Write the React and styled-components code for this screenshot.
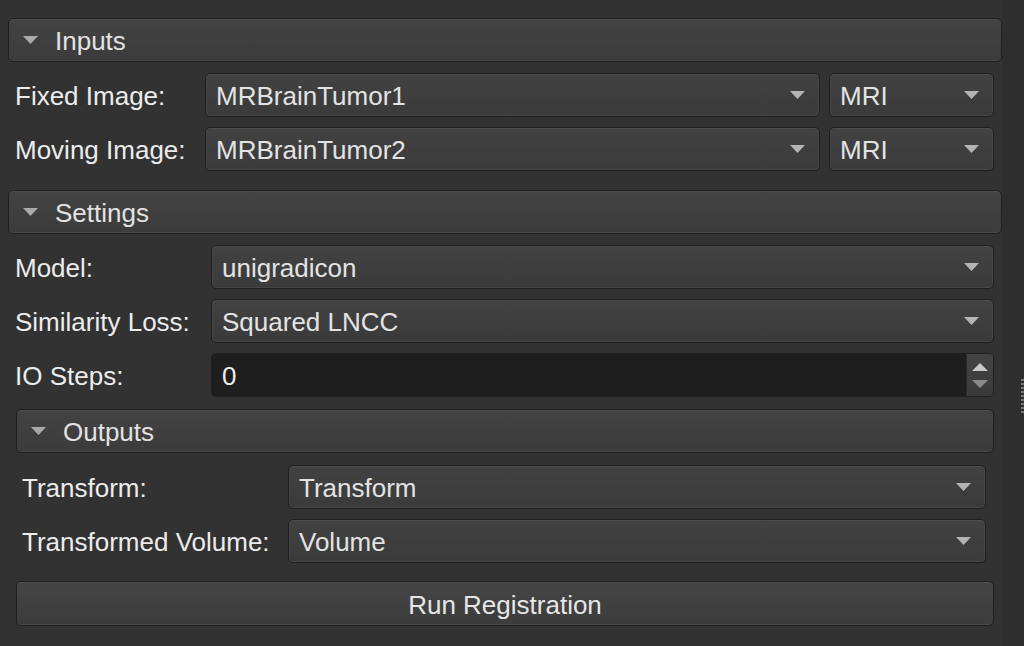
import styled, { createGlobalStyle } from 'styled-components';

const GlobalStyle = createGlobalStyle`
  html, body {
    margin: 0;
    padding: 0;
    background: #323232;
  }
  body {
    font-family: "Liberation Sans", Arial, sans-serif;
    font-size: 26px;
    color: #e6e6e6;
  }
`;

// ─── page frame ───
const Page = styled.div`
  display: flex;
  width: 1024px;
  height: 646px;
  overflow: hidden;
  background: #323232;
`;

const Panel = styled.div`
  width: 994px;
  padding: 18px 0 0 8px;
  display: flex;
  flex-direction: column;
`;

const SideStrip = styled.div`
  flex: 1;
  background: #2e2e2e;
  display: flex;
  justify-content: flex-end;
  padding-top: 379px;
`;

const SplitHandle = styled.div`
  width: 3px;
  height: 34px;
  background: repeating-linear-gradient(
    to bottom,
    #777 0px,
    #777 2px,
    transparent 2px,
    transparent 4px
  );
`;

// ─── collapsible section ───
const SectionHeader = styled.div`
  height: 44px;
  box-sizing: border-box;
  display: flex;
  align-items: center;
  gap: 17px;
  padding: 2px 0 0 14px;
  margin-left: ${p => p.$indent || 0}px;
  margin-top: ${p => p.$top || 0}px;
  border: 1px solid #1f1f1f;
  border-radius: 5px;
  background: linear-gradient(to bottom, #434343, #3b3b3b);
  box-shadow: inset 0 1px 0 #4d4d4d, inset 0 -1px 0 #464646;
  color: #e2e2e2;

  svg {
    margin-top: -2px;
  }
`;

const SectionBody = styled.div`
  display: flex;
  flex-direction: column;
  gap: 10px;
  padding: ${p => p.$top || 11}px ${p => p.$right || 8}px 0 ${p => p.$left || 7}px;
  margin-bottom: ${p => p.$bottom || 0}px;
`;

const Caret = () => (
  <svg width="15" height="8" viewBox="0 0 15 8">
    <polygon points="0,0 15,0 7.5,8" fill="#a9a9a9" />
  </svg>
);

// ─── form rows ───
const Row = styled.div`
  display: grid;
  grid-template-columns: ${p => p.$label}px 1fr ${p => (p.$extra ? '165px' : '')};
  column-gap: 9px;
  height: 44px;
  align-items: stretch;
`;

const Label = styled.div`
  display: flex;
  align-items: center;
  padding-top: 3px;
  color: #ececec;
  white-space: nowrap;
`;

const Combo = styled.div`
  display: flex;
  align-items: center;
  justify-content: space-between;
  box-sizing: border-box;
  padding: 0 14px 0 10px;
  border: 1px solid #1f1f1f;
  border-radius: 5px;
  background: linear-gradient(to bottom, #424242, #3a3a3a);
  box-shadow: inset 0 1px 0 #4c4c4c, inset 0 -1px 0 #454545, inset 1px 0 0 #454545, inset -1px 0 0 #454545;
  color: #e3e3e3;
  white-space: nowrap;

  span {
    padding-top: 3px;
  }
`;

const ComboArrow = () => (
  <svg width="15" height="8" viewBox="0 0 15 8">
    <polygon points="0,0 15,0 7.5,8" fill="#b4b4b4" />
  </svg>
);

const SpinBox = styled.div`
  display: flex;
  box-sizing: border-box;
  border: 1px solid #1f1f1f;
  border-radius: 5px;
  overflow: hidden;
`;

const SpinField = styled.div`
  flex: 1;
  display: flex;
  align-items: center;
  padding: 3px 0 0 10px;
  background: #1e1e1e;
  color: #ededed;
`;

const SpinButtons = styled.div`
  width: 26px;
  display: flex;
  flex-direction: column;
  align-items: center;
  justify-content: center;
  gap: 9px;
  background: linear-gradient(to bottom, #444, #3a3a3a);
  border-left: 1px solid #2a2a2a;
`;

const SpinArrow = ({ up }) => (
  <svg width="16" height="8" viewBox="0 0 16 8">
    {up
      ? <polygon points="0,8 16,8 8,0" fill="#c9c9c9" />
      : <polygon points="0,0 16,0 8,8" fill="#8a8a8a" />}
  </svg>
);

const RunButton = styled.button`
  height: 45px;
  margin: 8px 0 0 1px;
  box-sizing: border-box;
  border: 1px solid #1f1f1f;
  border-radius: 5px;
  background: linear-gradient(to bottom, #454545, #3c3c3c);
  box-shadow: inset 0 1px 0 #4e4e4e, inset 0 -1px 0 #474747;
  color: #e6e6e6;
  font-family: inherit;
  font-size: 26px;
  padding: 3px 0 0;
`;

function ComboRow({ label, value, extra, labelWidth }) {
  return (
    <Row $label={labelWidth} $extra={!!extra}>
      <Label>{label}</Label>
      <Combo>
        <span>{value}</span>
        <ComboArrow />
      </Combo>
      {extra && (
        <Combo>
          <span>{extra}</span>
          <ComboArrow />
        </Combo>
      )}
    </Row>
  );
}

export default function App() {
  return (
    <>
      <GlobalStyle />
      <Page>
        <Panel>
          <SectionHeader>
            <Caret />
            <span>Inputs</span>
          </SectionHeader>
          <SectionBody $bottom={19}>
            <ComboRow label="Fixed Image:" value="MRBrainTumor1" extra="MRI" labelWidth={181} />
            <ComboRow label="Moving Image:" value="MRBrainTumor2" extra="MRI" labelWidth={181} />
          </SectionBody>

          <SectionHeader>
            <Caret />
            <span>Settings</span>
          </SectionHeader>
          <SectionBody>
            <ComboRow label="Model:" value="unigradicon" labelWidth={187} />
            <ComboRow label="Similarity Loss:" value="Squared LNCC" labelWidth={187} />
            <Row $label={187}>
              <Label>IO Steps:</Label>
              <SpinBox>
                <SpinField>0</SpinField>
                <SpinButtons>
                  <SpinArrow up />
                  <SpinArrow />
                </SpinButtons>
              </SpinBox>
            </Row>

            <SectionHeader $indent={1} $top={2}>
              <Caret />
              <span>Outputs</span>
            </SectionHeader>
            <SectionBody $top={2}>
              <ComboRow label="Transform:" value="Transform" labelWidth={257} />
              <ComboRow label="Transformed Volume:" value="Volume" labelWidth={257} />
            </SectionBody>

            <RunButton>Run Registration</RunButton>
          </SectionBody>
        </Panel>
        <SideStrip>
          <SplitHandle />
        </SideStrip>
      </Page>
    </>
  );
}
